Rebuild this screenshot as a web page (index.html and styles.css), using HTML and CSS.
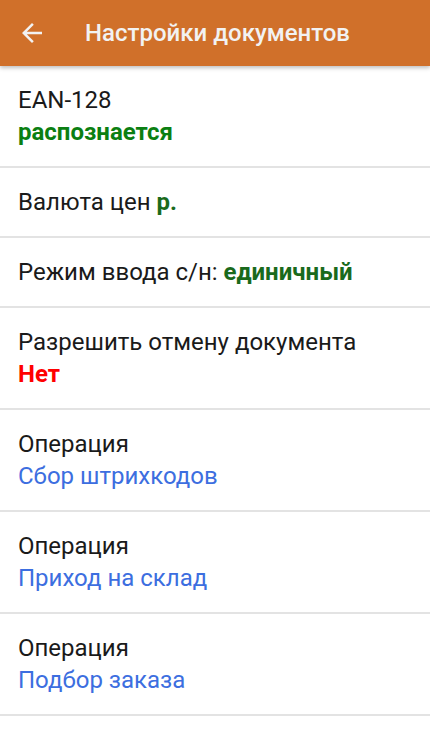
FILE: index.html
```html
<!DOCTYPE html>
<html lang="ru">
<head>
    <meta charset="UTF-8">
    <meta name="viewport" content="width=device-width, initial-scale=1.0">
    <title>Настройки документов</title>
    <link rel="stylesheet" href="styles.css">
</head>
<body>
    <header class="toolbar">
        <button class="back-btn" aria-label="Назад">
            <svg width="30" height="30" viewBox="0 0 24 24">
                <path d="M20 11H7.83l5.59-5.59L12 4l-8 8 8 8 1.41-1.41L7.83 13H20v-2z" fill="#f2f2f2"/>
            </svg>
        </button>
        <h1 class="title">Настройки документов</h1>
    </header>

    <ul class="settings">
        <li class="item">
            <div class="label">EAN-128</div>
            <div class="value ok">распознается</div>
        </li>
        <li class="item">
            <div class="label">Валюта цен <span class="value dark">р.</span></div>
        </li>
        <li class="item">
            <div class="label">Режим ввода с/н: <span class="value dark">единичный</span></div>
        </li>
        <li class="item">
            <div class="label">Разрешить отмену документа</div>
            <div class="value no">Нет</div>
        </li>
        <li class="item">
            <div class="label">Операция</div>
            <div class="value link">Сбор штрихкодов</div>
        </li>
        <li class="item">
            <div class="label">Операция</div>
            <div class="value link">Приход на склад</div>
        </li>
        <li class="item">
            <div class="label">Операция</div>
            <div class="value link">Подбор заказа</div>
        </li>
    </ul>
</body>
</html>
```

FILE: styles.css
```css
body {
    margin: 0;
    font-family: Roboto, 'Noto Sans', sans-serif;
    background: #fff;
    color: #1a1a1a;
}

.toolbar {
    height: 66px;
    display: flex;
    align-items: center;
    background-color: #d0702a;
    box-shadow: 0 2px 4px rgba(0,0,0,0.25);
    position: relative;
}

.back-btn {
    width: 64px;
    height: 66px;
    padding: 0 0 0 17px;
    display: flex;
    align-items: center;
    background: none;
    border: none;
}

.title {
    margin: 0 0 0 21px;
    font-size: 24px;
    font-weight: 500;
    color: #f2f2f2;
}

.settings {
    list-style: none;
    margin: 0;
    padding: 0;
}

.item {
    padding: 18px 18px;
    border-bottom: 2px solid #e3e3e3;
    font-size: 24px;
    line-height: 32px;
}

.value {
    font-weight: 700;
}

.ok {
    color: #0b7f12;
}

.dark {
    color: #1a6a1c;
}

.no {
    color: #ff0000;
}

.link {
    font-weight: 400;
    color: #3c6ee0;
}
```
